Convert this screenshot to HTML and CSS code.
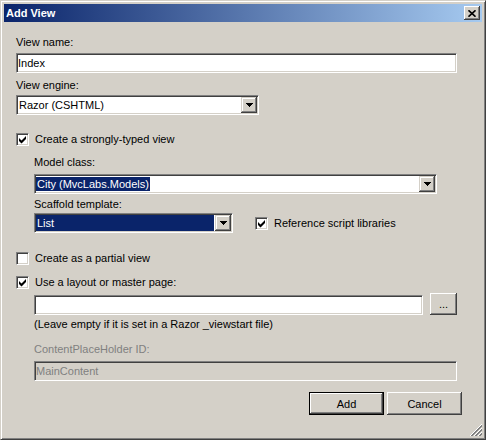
FILE: index.html
```html
<!DOCTYPE html>
<html>
<head>
<meta charset="utf-8">
<title>Add View</title>
<link rel="stylesheet" href="styles.css">
</head>
<body>
<div class="window">
  <div class="titlebar">
    <span class="title">Add View</span>
    <span class="caption-btn"><svg width="8" height="7" viewBox="0 0 8 7"><path d="M0.5 0.3 L7.5 6.7 M7.5 0.3 L0.5 6.7" stroke="#000" stroke-width="1.6" fill="none"/></svg></span>
  </div>
  <div class="client">
    <div class="label l-name">View name:</div>
    <div class="edit e-name">Index</div>
    <div class="label l-engine">View engine:</div>
    <div class="combo c-engine">
      <div class="combo-text">Razor (CSHTML)</div>
      <div class="drop"><svg width="7" height="4" viewBox="0 0 7 4"><path d="M0 0h7v1h-1v1h-1v1h-1v1h-1v-1h-1v-1h-1v-1h-1z" fill="#000"/></svg></div>
    </div>
    <div class="check-row r-strong">
      <span class="checkbox"><svg width="11" height="11" viewBox="1 1 11 11"><path d="M3 5 L3 8 L5.5 10.5 L10 6 L10 3 L5.5 7.5 Z" fill="#000"/></svg></span>
      <span>Create a strongly-typed view</span>
    </div>
    <div class="indent">
      <div class="label l-model">Model class:</div>
      <div class="combo c-model">
        <div class="combo-text flush"><span class="hl">City (MvcLabs.Models)</span></div>
        <div class="drop"><svg width="7" height="4" viewBox="0 0 7 4"><path d="M0 0h7v1h-1v1h-1v1h-1v1h-1v-1h-1v-1h-1v-1h-1z" fill="#000"/></svg></div>
      </div>
      <div class="label l-scaffold">Scaffold template:</div>
      <div class="scaffold-row">
        <div class="combo c-scaffold">
          <div class="combo-text selected">List</div>
          <div class="drop"><svg width="7" height="4" viewBox="0 0 7 4"><path d="M0 0h7v1h-1v1h-1v1h-1v1h-1v-1h-1v-1h-1v-1h-1z" fill="#000"/></svg></div>
        </div>
        <div class="check-row r-ref">
          <span class="checkbox"><svg width="11" height="11" viewBox="1 1 11 11"><path d="M3 5 L3 8 L5.5 10.5 L10 6 L10 3 L5.5 7.5 Z" fill="#000"/></svg></span>
          <span>Reference script libraries</span>
        </div>
      </div>
    </div>
    <div class="check-row r-partial">
      <span class="checkbox"></span>
      <span>Create as a partial view</span>
    </div>
    <div class="check-row r-layout">
      <span class="checkbox"><svg width="11" height="11" viewBox="1 1 11 11"><path d="M3 5 L3 8 L5.5 10.5 L10 6 L10 3 L5.5 7.5 Z" fill="#000"/></svg></span>
      <span>Use a layout or master page:</span>
    </div>
    <div class="indent">
      <div class="layout-row">
        <div class="edit e-layout"></div>
        <div class="btn btn-browse">...</div>
      </div>
      <div class="label hint">(Leave empty if it is set in a Razor _viewstart file)</div>
      <div class="label l-cph disabled-text">ContentPlaceHolder ID:</div>
      <div class="edit e-cph disabled">MainContent</div>
    </div>
    <div class="buttons">
      <div class="btn btn-default">Add</div>
      <div class="btn">Cancel</div>
    </div>
  </div>
  <svg class="grip" width="12" height="12" viewBox="0 0 12 12">
    <path d="M12 1L1 12M12 2L2 12M12 5L5 12M12 6L6 12M12 9L9 12M12 10L10 12" stroke="#808080" stroke-width="1" fill="none"/>
    <path d="M12 0L0 12M12 4L4 12M12 8L8 12" stroke="#ffffff" stroke-width="1" fill="none"/>
  </svg>
</div>
</body>
</html>
```
FILE: styles.css
```css
* { box-sizing: border-box; }
html, body { margin: 0; padding: 0; }
body {
  font-family: "Liberation Sans", Arial, sans-serif;
  font-size: 11px;
  color: #000;
  background: #d4d0c8;
}
.window {
  position: relative;
  width: 486px;
  height: 440px;
  background: #d4d0c8;
  border: 1px solid;
  border-color: #d4d0c8 #404040 #404040 #d4d0c8;
  box-shadow: inset 1px 1px #ffffff, inset -1px -1px #808080;
  padding: 3px;
}
.titlebar {
  height: 18px;
  display: flex;
  align-items: center;
  justify-content: space-between;
  padding: 0 2px;
  background: linear-gradient(to right, #0a246a, #a6caf0);
}
.title {
  color: #fff;
  font-weight: bold;
  font-size: 11px;
  line-height: 18px;
}
.caption-btn {
  width: 16px;
  height: 14px;
  background: #d4d0c8;
  display: flex;
  align-items: center;
  justify-content: center;
  box-shadow: inset -1px -1px #404040, inset 1px 1px #ffffff, inset -2px -2px #808080;
}
.caption-btn svg { display: block; }
.client {
  padding: 14px 25px 0 12px;
}
.label {
  height: 13px;
  line-height: 13px;
  white-space: nowrap;
}
.edit {
  height: 20px;
  background: #fff;
  border: 1px solid;
  border-color: #808080 #ffffff #ffffff #808080;
  box-shadow: inset 1px 1px #404040, inset -1px -1px #d4d0c8;
  padding: 0 1px;
  line-height: 18px;
  white-space: nowrap;
}
.edit.disabled {
  background: #d4d0c8;
  color: #808080;
}
.disabled-text { color: #808080; }
.combo {
  height: 20px;
  display: flex;
  background: #fff;
  border: 1px solid;
  border-color: #808080 #ffffff #ffffff #808080;
  box-shadow: inset 1px 1px #404040, inset -1px -1px #d4d0c8;
  padding: 1px;
}
.combo-text {
  flex: 1;
  line-height: 16px;
  padding-left: 1px;
  white-space: nowrap;
  overflow: hidden;
}
.combo-text.flush { padding-left: 0; }
.combo-text.selected {
  background: #0a246a;
  color: #fff;
  margin-right: 1px;
}
.hl {
  display: inline-block;
  vertical-align: top;
  margin-top: 1px;
  line-height: 14px;
  padding: 0 1px;
  background: #0a246a;
  color: #fff;
}
.drop {
  width: 16px;
  height: 16px;
  flex: none;
  background: #d4d0c8;
  display: flex;
  align-items: center;
  justify-content: center;
  box-shadow: inset -1px -1px #404040, inset 1px 1px #d4d0c8, inset -2px -2px #808080, inset 2px 2px #ffffff;
}
.drop svg { display: block; margin-left: 1px; }
.check-row {
  display: flex;
  align-items: center;
  gap: 6px;
  height: 13px;
  line-height: 13px;
  white-space: nowrap;
}
.checkbox {
  width: 13px;
  height: 13px;
  flex: none;
  background: #fff;
  border: 1px solid;
  border-color: #808080 #ffffff #ffffff #808080;
  box-shadow: inset 1px 1px #404040, inset -1px -1px #d4d0c8;
}
.checkbox svg { display: block; }
.indent { padding-left: 18px; }

.e-name { margin-top: 4px; }
.l-engine { margin-top: 6px; }
.c-engine { margin-top: 3px; width: 243px; }
.r-strong { margin-top: 18px; }
.l-model { margin-top: 10px; }
.c-model { margin-top: 5px; width: 403px; }
.l-scaffold { margin-top: 4px; }
.scaffold-row {
  margin-top: 2px;
  display: flex;
  align-items: center;
}
.c-scaffold { width: 199px; }
.r-ref { margin-left: 22px; }
.r-partial { margin-top: 19px; }
.r-layout { margin-top: 11px; }
.layout-row {
  margin-top: 4px;
  display: flex;
  align-items: flex-end;
}
.e-layout { width: 390px; }
.btn {
  width: 75px;
  height: 23px;
  background: #d4d0c8;
  display: flex;
  align-items: center;
  justify-content: center;
  box-shadow: inset -1px -1px #404040, inset 1px 1px #ffffff, inset -2px -2px #808080;
  white-space: nowrap;
}
.btn-browse {
  width: 27px;
  height: 22px;
  margin-left: 7px;
}
.btn-default {
  border: 1px solid #000;
}
.hint { margin-top: 3px; }
.l-cph { margin-top: 12px; }
.e-cph { margin-top: 5px; padding-left: 1px; }
.buttons {
  margin-top: 11px;
  margin-right: -5px;
  display: flex;
  justify-content: flex-end;
  gap: 3px;
}
.grip {
  position: absolute;
  right: 3px;
  bottom: 3px;
  display: block;
}
```
